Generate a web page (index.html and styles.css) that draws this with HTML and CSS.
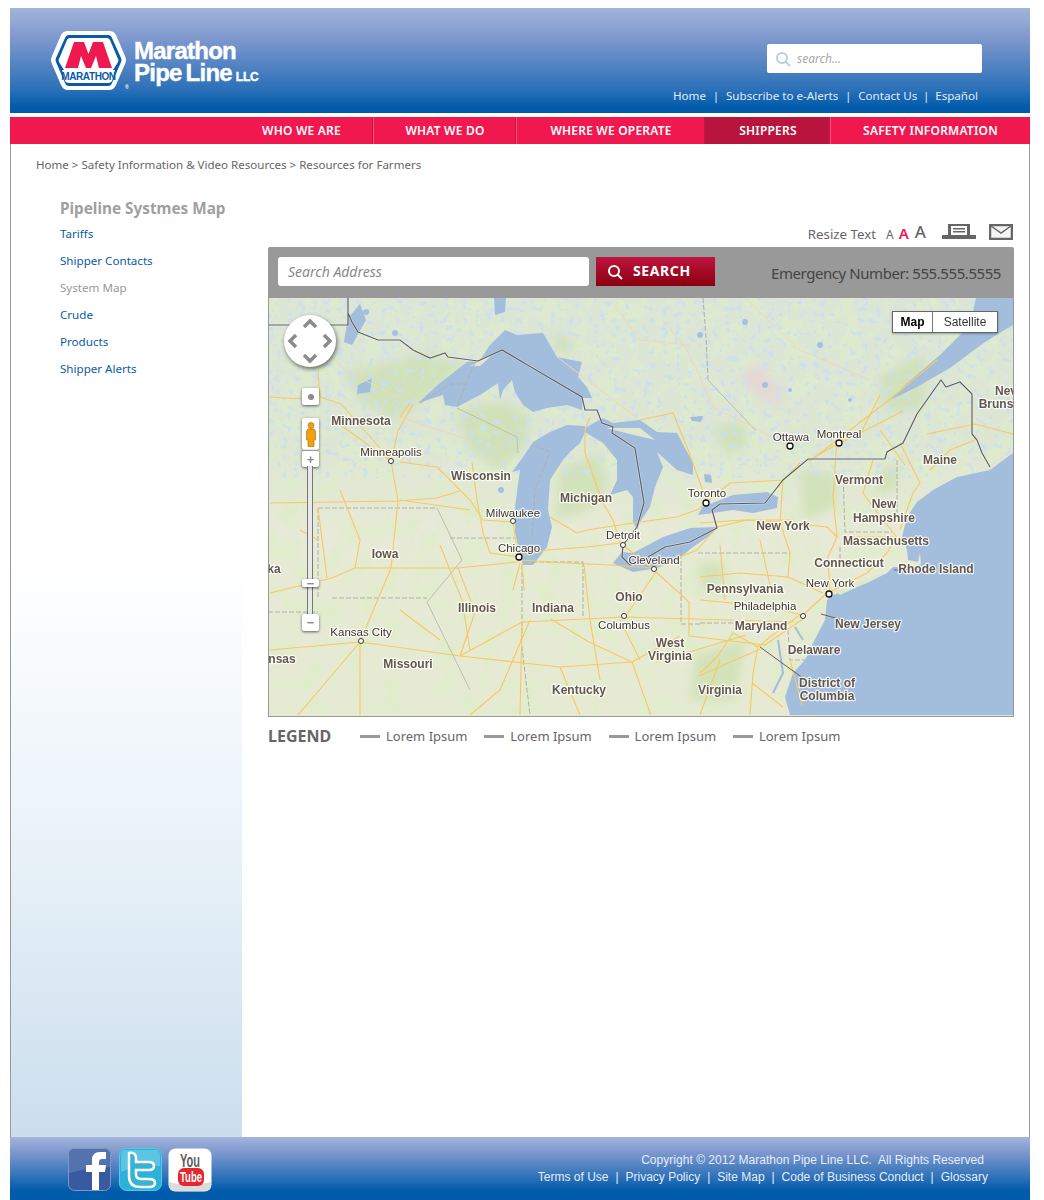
FILE: index.html
```html
<!DOCTYPE html>
<html lang="en">
<head>
<meta charset="utf-8">
<title>Marathon Pipe Line LLC - Pipeline Systems Map</title>
<link rel="stylesheet" href="styles.css">
</head>
<body>
<div class="page">
  <header class="header">
    <a class="brand" href="#">
      <svg class="logo" viewBox="0 0 78 62" width="78" height="62" aria-hidden="true">
        <path class="logo-outer" d="M17 0H58Q63 0 65 4L74 25Q76 29 74 33L65 54Q63 59 58 59H17Q12 59 10 54L1 33Q-1 29 1 25L10 4Q12 0 17 0Z"/>
        <path class="logo-blue" d="M18 4H57Q60 4 61 7L70 27Q71 29 70 31L61 52Q60 55 57 55H18Q15 55 14 52L5 31Q4 29 5 27L14 7Q15 4 18 4Z"/>
        <path class="logo-outer" d="M19 7H56Q58 7 59 9L67 28Q68 29 67 31L62 39H13L8 31Q7 29 8 28L16 9Q17 7 19 7Z"/>
        <path class="logo-red" d="M14 37L23 11H33L37.500 23L42 11H52L61 37H48L45 25L40 37H35L30 25L27 37Z"/>
        <path class="logo-outer" d="M11 39H64L61 50Q60 52 57 52H18Q15 52 14 50Z"/>
        <text class="logo-word" x="37.500" y="49">MARATHON</text>
        <text class="logo-reg" x="74" y="58">®</text>
      </svg>
      <span class="brand-name">Marathon<br>Pipe Line <small>LLC</small></span>
    </a>
    <div class="header-tools">
      <div class="site-search">
        <svg width="16" height="16" viewBox="0 0 16 16" aria-hidden="true"><circle class="glass" cx="7" cy="7" r="5"/><path class="glass" d="M10.500 10.500L15 15"/></svg>
        <span>search...</span>
      </div>
      <nav class="top-links">
        <a href="#">Home</a><i>|</i><a href="#">Subscribe to e-Alerts</a><i>|</i><a href="#">Contact Us</a><i class="tight">|</i><a href="#">Español</a>
      </nav>
    </div>
  </header>
  <nav class="mainnav">
    <a class="n1" href="#">WHO WE ARE</a>
    <a class="n2" href="#">WHAT WE DO</a>
    <a class="n3" href="#">WHERE WE OPERATE</a>
    <a class="n4 active" href="#">SHIPPERS</a>
    <a class="n5" href="#">SAFETY INFORMATION</a>
  </nav>
  <main class="main">
    <div class="crumbs">Home &gt; Safety Information &amp; Video Resources &gt; Resources for Farmers</div>
    <div class="columns">
      <aside class="sidebar">
        <h2>Pipeline Systmes Map</h2>
        <ul>
          <li><a href="#">Tariffs</a></li>
          <li><a href="#">Shipper Contacts</a></li>
          <li class="current">System Map</li>
          <li><a href="#">Crude</a></li>
          <li><a href="#">Products</a></li>
          <li><a href="#">Shipper Alerts</a></li>
        </ul>
      </aside>
      <section class="content">
        <div class="tools">
          <span class="resize">Resize Text</span>
          <span class="a a1">A</span><span class="a a2">A</span><span class="a a3">A</span>
          <svg class="print" width="34" height="16" viewBox="0 0 34 16" aria-hidden="true"><path class="tool-fill" d="M6 0H28V11H34V15H0V11H6ZM9 2V11H25V2ZM11 4H23V5.500H11ZM11 7H23V8.500H11Z" fill-rule="evenodd"/></svg>
          <svg class="mail" width="24" height="16" viewBox="0 0 24 16" aria-hidden="true"><rect class="tool-line" x="1" y="1" width="22" height="14"/><path class="tool-thin" d="M2 2L12 9L22 2"/></svg>
        </div>
        <div class="searchbar">
          <div class="address">Search Address</div>
          <button class="go" type="button">
            <svg width="16" height="16" viewBox="0 0 16 16" aria-hidden="true"><circle class="go-glass" cx="7" cy="7" r="5"/><path class="go-glass" d="M10.500 10.500L15 15"/></svg>
            <span>SEARCH</span>
          </button>
          <div class="emergency">Emergency Number: 555.555.5555</div>
        </div>
        <div class="map">
          <svg class="map-art" width="744" height="417" viewBox="269 298 744 417" aria-label="Map of the Great Lakes and north-eastern United States">
            <defs>
              <linearGradient id="land" x1="0" y1="0" x2="0" y2="1">
                <stop offset="0" stop-color="#dce6d6"/><stop offset=".35" stop-color="#dde6d2"/><stop offset=".55" stop-color="#e7ead6"/><stop offset="1" stop-color="#e6ead2"/>
              </linearGradient>
              <filter id="mottle" x="0" y="0" width="100%" height="100%">
                <feTurbulence type="fractalNoise" baseFrequency=".05" numOctaves="4" seed="7"/>
                <feColorMatrix type="matrix" values="0 0 0 0 .74  0 0 0 0 .85  0 0 0 0 .60  0 0 0 6 -2.900"/>
              </filter>
              <filter id="speck" x="0" y="0" width="100%" height="100%">
                <feTurbulence type="fractalNoise" baseFrequency=".16" numOctaves="2" seed="23"/>
                <feColorMatrix type="matrix" values="0 0 0 0 .60  0 0 0 0 .74  0 0 0 0 .90  0 0 0 14 -8.600"/>
              </filter>
              <filter id="soft"><feGaussianBlur stdDeviation="4"/></filter>
            </defs>
            <rect x="269" y="298" width="744" height="417" fill="url(#land)"/>
            <rect class="mottle" x="269" y="298" width="744" height="417" filter="url(#mottle)"/>
            <g class="green" filter="url(#soft)">
              <path d="M345 372L395 362L430 352L444 362L470 362L440 385L418 403L395 420L360 400Z"/>
              <path d="M455 410L500 402L530 415L525 445L500 470L470 450Z"/>
              <path d="M560 470L600 455L608 490L590 510L555 520Z"/>
              <path d="M715 428L745 423L748 445L725 455Z"/>
              <path d="M800 470L835 475L838 505L805 520Z"/>
              <path d="M880 470L900 465L895 490L875 495Z"/>
              <path d="M880 375L925 355L925 410L885 410Z"/>
              <path d="M700 560L725 565L720 590L700 590Z"/>
              <path d="M695 655L745 640L735 700L690 700Z"/>
              <path d="M553 330L575 345L570 355L555 350Z"/>
            </g>
            <path class="pink" filter="url(#soft)" d="M740 375L760 362L782 392L780 405L755 395Z"/>
            <rect class="speck" x="269" y="298" width="744" height="180" filter="url(#speck)"/>
            <g class="water">
              <path d="M418 403L440 383L467 362L480 360L490 345L505 330L517 335L543 333L557 357L582 362L578 377L587 387L592 398L583 398L582 410L567 405L547 408L533 412L523 405L515 392L512 380L503 390L500 400L498 383L480 395L457 407L445 405L443 395Z"/>
              <path d="M585 426L567 425L550 432L533 442L523 457L512 472L520 470L515 507L515 533L523 565L533 565L547 547L552 527L548 510L550 480L563 460L570 452L580 443L585 432Z"/>
              <path d="M585 428L603 418L613 423L640 420L657 432L677 433L693 463L693 475L677 470L657 452L663 467L655 487L650 507L640 522L637 530L633 522L633 497L627 490L610 495L617 480L617 460L603 443L585 432Z"/>
              <path d="M613 563L622 552L633 553L663 537L690 528L717 527L713 533L693 547L677 560L657 568L633 572Z"/>
              <path d="M698 515L702 507L733 495L767 492L778 497L777 508L753 513L733 510L713 513Z"/>
              <path d="M1013 453L990 470L957 477L933 490L917 502L907 517L902 537L907 550L908 560L918 562L920 553L921 564L913 567L893 567L887 573L867 583L833 595L827 600L825 620L813 643L805 660L793 673L785 697L790 715H1013Z"/>
              <path d="M976 298L970 325L940 355L905 385L890 400L915 388L950 368L985 342L1013 325V298Z"/>
              <path d="M348 318L360 304L366 320L352 345L344 342Z"/>
              <path d="M358 385L372 378L370 392L357 394Z"/>
              <path d="M494 298L506 298L505 312L495 315Z"/>
              <path d="M690 417L703 416L701 422L692 421Z"/>
              <path d="M704 474L711 475L712 483L705 482Z"/>
            </g>
            <path class="land-strip" d="M836 591L862 580L886 572L870 581L840 595ZM470 366L492 355L480 366ZM606 428L640 428L655 440L630 434Z"/>
            <path class="bay" d="M778 640L783 673L773 693M795 627L803 640"/>
            <g class="lakes">
              <circle cx="366" cy="312" r="3"/><circle cx="395" cy="333" r="3"/><circle cx="700" cy="335" r="3"/><circle cx="745" cy="322" r="3"/><circle cx="820" cy="345" r="3"/><circle cx="765" cy="385" r="3"/><circle cx="790" cy="390" r="2"/><circle cx="850" cy="400" r="2"/><circle cx="501" cy="490" r="3"/>
            </g>
            <g class="state">
              <path d="M318 508H437M332 598H427M522 565V639M583 562V618M532 562H583M681 547V624H700M698 553H790M700 623H745M843 473L845 532H892M897 460V513M840 547V567M788 630L790 660H805M703 298L706 337L708 380M475 362L457 407M420 403L450 384H467M533 445L550 452L535 490L532 537M450 538H515M268 612H318M318 508V598M521 639L530 715"/>
            </g>
            <path class="shade" d="M457 408L517 437L518 453M708 380L756 431M437 508L462 560L427 602M427 602L470 690"/>
            <g class="roads pale">
              <path d="M663 320L687 350L700 377L713 407L753 427L790 447M610 300L640 340L690 345M557 357L640 420M745 298L800 350L870 380M400 417L470 440M320 345L345 370L410 403"/>
            </g>
            <g class="roads">
              <path d="M400 462L437 467L470 500L483 520L513 522L518 557L547 550L587 547L620 543M518 560L567 563L610 565L653 568"/>
              <path d="M620 543L613 520L603 503L585 453L585 430L590 417M550 517L577 533L587 530L633 523L677 517L697 510L707 502"/>
              <path d="M620 543L653 568L697 550L717 527L747 520L793 520M707 502L730 483L783 480L800 463M707 502L687 447L673 413L640 420"/>
              <path d="M400 500L470 510M472 463L477 500L483 533L490 553L518 557M400 417L410 403M520 563L513 590M522 563L524 590"/>
              <path d="M700 523L743 520L780 522L827 527L837 537M783 480L780 522L790 553L788 577L823 593M837 440L833 497L837 537L828 557L830 593"/>
              <path d="M873 460L863 493L883 520L897 537L887 553L867 573L830 592M900 443L920 483L913 493L900 530M850 537H897"/>
              <path d="M700 577L740 573L788 577M700 600L733 603L767 607L803 615L827 593M800 615L770 637L758 647L753 673L750 715M758 647L733 633L717 657L700 673M752 683L783 707"/>
              <path d="M270 650L360 642L460 656L522 622L625 617L794 622M360 642L298 715M360 642V715M460 656L560 667L632 662L680 636M332 578L355 568L458 568L518 562"/>
              <path d="M270 503L398 501L437 498L460 491M270 593L332 578M458 568L475 612L460 656M318 508L327 578M391 461L398 501L391 568L360 642M270 397L303 399M413 404L398 431L391 461M332 419L391 461M318 370L320 397L341 404L389 458"/>
              <path d="M560 667L580 715M551 619L589 642L632 662M522 622L520 715M625 617L656 572M656 572L689 602L689 636L765 645L803 619M656 662L746 635M699 676L760 649M632 662L651 716"/>
              <path d="M810 461L889 400L937 360M839 444L903 411M927 434L975 424L1013 434M808 461L839 443L851 432M930 470L950 450L975 440M880 430L905 465M860 435L880 395"/>
              <path d="M440 545L462 600L470 650M530 620L500 690L470 715M584 565L590 620L600 680M620 620L640 660M760 540L770 585M720 545L725 600M400 610L440 640M340 490L360 540L355 568M300 530L318 540M790 660L802 705M720 660L700 715"/>
            </g>
            <path class="border-halo" d="M348 298V325H268M348 313L352 322L358 332L378 340L400 340L413 350L430 358L445 353L448 357L478 361L502 350L582 397L585 410L597 410L602 423L613 427L612 433L635 448L644 503L637 527L623 545L622 557L630 565L648 557L665 547L690 542L717 528L712 510L720 504L765 503L783 480L808 459H885L887 452L903 443L917 414L941 380L946 387L960 382L972 394V434L977 440L982 453L990 467"/>
            <path class="border" d="M348 298V325H268M348 313L352 322L358 332L378 340L400 340L413 350L430 358L445 353L448 357L478 361L502 350L582 397L585 410L597 410L602 423L613 427L612 433L635 448L644 503L637 527L623 545L622 557L630 565L648 557L665 547L690 542L717 528L712 510L720 504L765 503L783 480L808 459H885L887 452L903 443L917 414L941 380L946 387L960 382L972 394V434L977 440L982 453L990 467"/>
            <path class="leader" d="M894 570H908M821 614L846 621M760 647L811 684"/>
            <g class="pins">
              <circle cx="391" cy="461" r="2.500"/><circle cx="513" cy="521" r="2.500"/><circle cx="623" cy="545" r="2.500"/><circle cx="654" cy="569" r="2.500"/><circle cx="803" cy="616" r="2.500"/><circle cx="624" cy="616" r="2.500"/><circle cx="361" cy="641" r="2.500"/>
            </g>
            <g class="pins big">
              <circle cx="519" cy="557" r="3"/><circle cx="706" cy="503" r="3"/><circle cx="790" cy="446" r="3"/><circle cx="839" cy="443" r="3"/><circle cx="829" cy="594" r="3"/>
            </g>
            <g class="lbl bold">
              <text x="361" y="425">Minnesota</text><text x="481" y="480">Wisconsin</text><text x="586" y="502">Michigan</text><text x="385" y="558">Iowa</text><text x="940" y="464">Maine</text><text x="859" y="484">Vermont</text><text x="884" y="508">New</text><text x="884" y="522">Hampshire</text><text x="783" y="530">New York</text><text x="886" y="545">Massachusetts</text><text x="849" y="567">Connecticut</text><text x="936" y="573">Rhode Island</text><text x="745" y="593">Pennsylvania</text><text x="761" y="630">Maryland</text><text x="868" y="628">New Jersey</text><text x="814" y="654">Delaware</text><text x="827" y="687">District of</text><text x="827" y="700">Columbia</text><text x="670" y="647">West</text><text x="670" y="660">Virginia</text><text x="720" y="694">Virginia</text><text x="579" y="694">Kentucky</text><text x="629" y="601">Ohio</text><text x="553" y="612">Indiana</text><text x="477" y="612">Illinois</text><text x="408" y="668">Missouri</text><text x="274" y="573">ka</text><text x="282" y="663">nsas</text><text x="1006" y="395">Nev</text><text x="996" y="408">Bruns</text>
            </g>
            <g class="lbl">
              <text x="391" y="456">Minneapolis</text><text x="513" y="517">Milwaukee</text><text x="519" y="552">Chicago</text><text x="623" y="539">Detroit</text><text x="707" y="497">Toronto</text><text x="791" y="441">Ottawa</text><text x="839" y="438">Montreal</text><text x="830" y="587">New York</text><text x="765" y="610">Philadelphia</text><text x="624" y="629">Columbus</text><text x="654" y="564">Cleveland</text><text x="361" y="636">Kansas City</text>
            </g>
          </svg>
          <div class="pan">
            <svg width="52" height="52" viewBox="0 0 52 52" aria-hidden="true"><path class="chev" d="M20 12L26 6L32 12M12 20L6 26L12 32M40 20L46 26L40 32M20 40L26 46L32 40"/></svg>
          </div>
          <div class="zoom-ctl center"><b></b></div>
          <div class="zoom-ctl person">
            <svg width="10" height="25" viewBox="0 0 10 25" aria-hidden="true"><circle class="peg" cx="5" cy="3.500" r="3"/><path class="peg" d="M2 7H8L9.500 9V18H8V24.500H2V18H.5V9Z"/></svg>
          </div>
          <div class="zoom-ctl plus">+</div>
          <div class="zoom-track"></div>
          <div class="zoom-ctl thumb">−</div>
          <div class="zoom-ctl minus">−</div>
          <div class="maptype"><b>Map</b><span>Satellite</span></div>
        </div>
        <div class="legend">
          <strong>LEGEND</strong>
          <span class="key">Lorem Ipsum</span>
          <span class="key">Lorem Ipsum</span>
          <span class="key">Lorem Ipsum</span>
          <span class="key">Lorem Ipsum</span>
        </div>
      </section>
    </div>
  </main>
  <footer class="footer">
    <div class="social">
      <svg width="43" height="43" viewBox="0 0 43 43" aria-label="Facebook"><rect class="fb" x="0.500" y="0.500" width="42" height="42" rx="6"/><path class="fb-gloss" d="M1 6Q1 1 6 1H37Q42 1 42 6V19Q20 20 1 25Z"/><path class="fb-f" d="M24 42V24H18V17H24V12Q24 4 32 4H38V11H34Q31 11 31 14V17H38L37 24H31V42Z"/></svg>
      <svg width="43" height="43" viewBox="0 0 43 43" aria-label="Twitter"><rect class="tw" x="0.500" y="0.500" width="42" height="42" rx="7"/><path class="tw-gloss" d="M2 7Q2 2 7 2H36Q41 2 41 7V18Q20 16 2 24Z"/><path class="tw-t" d="M10 5Q17 4 17 10V14H30Q35 14 35 18Q35 22 30 22H17V26Q17 31 22 31H30Q36 31 36 35Q36 39 30 39H21Q10 39 10 28Z"/></svg>
      <svg width="44" height="44" viewBox="0 0 44 44" aria-label="YouTube"><rect class="yt" x="0.500" y="0.500" width="43" height="43" rx="7"/><path class="yt-shade" d="M1 34Q20 40 43 34V37Q43 43 37 43H7Q1 43 1 37Z"/><text class="yt-you" x="12" y="19" textLength="20" lengthAdjust="spacingAndGlyphs">You</text><rect class="yt-red" x="10" y="20" width="26" height="18" rx="6"/><text class="yt-tube" x="12" y="34" textLength="22" lengthAdjust="spacingAndGlyphs">Tube</text></svg>
    </div>
    <div class="legal">
      <p class="copy">Copyright © 2012 Marathon Pipe Line LLC.&nbsp; All Rights Reserved</p>
      <p class="links"><a href="#">Terms of Use</a><i>|</i><a href="#">Privacy Policy</a><i>|</i><a href="#">Site Map</a><i>|</i><a href="#">Code of Business Conduct</a><i>|</i><a href="#">Glossary</a></p>
    </div>
  </footer>
</div>
</body>
</html>
```

FILE: styles.css
```css
* { box-sizing: border-box; }
html, body { margin: 0; padding: 0; background: #fff; }
body { font-family: "Noto Sans", "Open Sans", sans-serif; color: #666; }
a { color: inherit; text-decoration: none; }

.page { width: 1020px; height: 1192px; margin: 8px 0 0 10px; display: flex; flex-direction: column; }

/* header */
.header { height: 105px; flex: none; display: flex; justify-content: space-between; background: linear-gradient(#a3b4dc 0%, #7c97cd 30%, #2b70b8 78%, #005bab 95%); }
.brand { display: flex; align-items: flex-start; gap: 5px; padding: 23px 0 0 41px; }
.logo { display: block; flex: none; }
.logo-outer { fill: #fff; }
.logo-blue { fill: #0b5aa8; }
.logo-red { fill: #ee1a4f; }
.logo-word { font: 700 10px "Liberation Sans", sans-serif; fill: #0b5aa8; text-anchor: middle; letter-spacing: -.4px; }
.logo-reg { font: 700 5px "Liberation Sans", sans-serif; fill: #fff; }
.brand-name { font: 700 24px/22px "Liberation Sans", sans-serif; color: #fff; letter-spacing: -.75px; word-spacing: -2px; padding-top: 9px; -webkit-text-stroke: .4px #fff; white-space: nowrap; }
.brand-name small { font-size: 12px; letter-spacing: -.3px; }
.header-tools { width: 263px; padding: 36px 0 0; display: flex; flex-direction: column; }
.site-search { width: 215px; height: 29px; background: #fff; border-radius: 2px; display: flex; align-items: center; gap: 6px; padding-left: 8px; font-size: 12px; font-style: italic; color: #aaa; }
.glass { fill: none; stroke: #b7cfe2; stroke-width: 2; }
.top-links { margin-top: 14px; display: flex; font-size: 11.600px; line-height: 18px; color: #e2ebf6; white-space: nowrap; margin-left: -94px; }
.top-links i { font-style: normal; width: 20px; text-align: center; }
.top-links i.tight { width: 18px; }

/* main navigation */
.mainnav { margin-top: 4px; height: 27px; flex: none; background: #f0184f; display: flex; padding-left: 219px; font-size: 12px; font-weight: 600; letter-spacing: .2px; line-height: 27px; color: #fff; white-space: nowrap; }
.mainnav a { text-align: center; padding-left: 2px; border-right: 1px solid #c51442; box-shadow: 1px 0 0 #f6517a; }
.n1 { width: 144px; }
.n2 { width: 143px; }
.n3 { width: 189px; }
.n4 { width: 125px; }
.mainnav .n5 { width: 199px; border-right: 0; box-shadow: none; }
.mainnav .active { background: #b8143e; }

/* body */
.main { flex: 1; min-height: 0; border-left: 1px solid #999; border-right: 1px solid #999; display: flex; flex-direction: column; }
.crumbs { height: 40px; flex: none; padding: 13px 0 0 25px; font-size: 11.550px; line-height: 16px; color: #666; }
.columns { flex: 1; min-height: 0; display: flex; }
.sidebar { width: 231px; flex: none; padding: 14px 0 0 49px; background: linear-gradient(#fff 0, #fff 40%, #eaf3f9 68%, #cbdeed 100%); }
.sidebar h2 { margin: 0; font-size: 15.300px; line-height: 20px; font-weight: 700; color: #a0a0a0; }
.sidebar ul { margin: 2px 0 0; padding: 0; list-style: none; font-size: 11.600px; line-height: 27px; color: #0a5ba8; }
.sidebar .current { color: #999; }

.content { width: 746px; margin-left: 26px; display: flex; flex-direction: column; }
.tools { height: 63px; flex: none; display: flex; align-items: flex-start; justify-content: flex-end; padding-top: 40px; color: #666; }
.resize { font-size: 13.300px; line-height: 18px; margin-top: 1px; }
.a { line-height: 18px; font-weight: 400; }
.a1 { font-size: 12px; margin: 2px 0 0 10px; }
.a2 { font-size: 15px; font-weight: 600; color: #f0184f; margin: 0 0 0 5px; }
.a3 { font-size: 17px; font-weight: 500; margin: -1px 0 0 6px; }
.print { margin: 0 0 0 16px; }
.mail { margin: 0 1px 0 13px; }
.tool-fill { fill: #666; }
.tool-line { fill: #f4f4f4; stroke: #666; stroke-width: 2.500; }
.tool-thin { fill: none; stroke: #666; stroke-width: 1.500; }

.searchbar { height: 51px; flex: none; background: #999; border-radius: 2px 2px 0 0; display: flex; align-items: flex-start; padding: 10px 13px 0 10px; }
.address { width: 311px; height: 29px; background: #fff; border-radius: 3px; padding-left: 10px; font-size: 14px; font-style: italic; line-height: 29px; color: #8a8a8a; }
.go { width: 119px; height: 29px; margin-left: 7px; padding: 0 0 0 11px; border: 0; display: flex; align-items: center; gap: 10px; background: linear-gradient(#c0143f, #8a0010); color: #fff; font: 700 14px/27px "Noto Sans", sans-serif; letter-spacing: .6px; }
.go span { margin-top: -2px; }
.go-glass { fill: none; stroke: #fff; stroke-width: 2; }
.emergency { margin-left: auto; font-size: 15px; line-height: 33px; color: #444; letter-spacing: -.43px; white-space: nowrap; }

.map { height: 419px; flex: none; position: relative; border: 1px solid #999; border-top: 0; overflow: hidden; background: #e6e9cf; }
.map-art { display: block; }
.mottle { opacity: .7; }
.speck { opacity: .8; }
.green path { fill: #c8deaa; opacity: .6; }
.pink { fill: #e8d4d6; opacity: .8; }
.water { fill: #a3bddd; }
.land-strip { fill: #dfe8cf; }
.bay { fill: none; stroke: #a3bddd; stroke-width: 2; }
.lakes { fill: #a4c0e2; }
.state { fill: none; stroke: #b0b0a8; stroke-width: 1; stroke-dasharray: 5 2; }
.shade { fill: none; stroke: #bdbdb0; stroke-width: 1; }
.roads path { fill: none; stroke: #f9c85f; stroke-width: 1.100; stroke-linejoin: round; }
.roads.pale path { stroke: #e8d9b8; stroke-width: 1; }
.border-halo { fill: none; stroke: #fff; stroke-width: 2.400; opacity: .45; }
.border { fill: none; stroke: #5e5e5e; stroke-width: 1.200; }
.leader { fill: none; stroke: #6a6155; stroke-width: 1; }
.pins circle { fill: #fff; stroke: #333; stroke-width: 1; }
.pins.big circle { stroke: #111; stroke-width: 1.300; }
.lbl text { font: 400 11.500px "Liberation Sans", sans-serif; fill: #3d352c; text-anchor: middle; paint-order: stroke; stroke: rgba(255, 255, 255, .8); stroke-width: 2.500px; stroke-linejoin: round; }
.lbl.bold text { font-weight: 700; fill: #62574a; font-size: 12px; }

.pan { position: absolute; left: 15px; top: 17px; width: 52px; height: 52px; border-radius: 50%; background: #fff; box-shadow: 1px 2px 4px rgba(0, 0, 0, .55); }
.pan svg { display: block; }
.chev { fill: none; stroke: #8b8b8b; stroke-width: 3.500; }
.zoom-ctl { position: absolute; left: 33px; width: 17px; background: #fff; border-radius: 2px; box-shadow: 0 1px 3px rgba(0, 0, 0, .6); display: flex; align-items: center; justify-content: center; font: 700 13px/1 "Liberation Sans", sans-serif; color: #8b8b8b; }
.center { top: 90px; height: 17px; }
.center b { width: 6px; height: 6px; border-radius: 50%; background: #8b8b8b; }
.person { top: 120px; height: 32px; }
.peg { fill: #f0a10e; stroke: #b06a05; stroke-width: .6; }
.plus { top: 152px; height: 17px; border-top: 1px solid #999; }
.zoom-track { position: absolute; left: 38px; top: 168px; width: 6px; height: 150px; background: #e9e9e9; border-left: 1px solid #777; border-right: 1px solid #777; }
.thumb { top: 281px; height: 8px; }
.minus { top: 316px; height: 17px; }
.maptype { position: absolute; right: 15px; top: 13px; height: 22px; display: flex; font: 12px/20px "Liberation Sans", sans-serif; color: #333; background: #fff; border: 1px solid #666; box-shadow: 0 1px 2px rgba(0, 0, 0, .3); }
.maptype b { width: 40px; text-align: center; color: #000; border-right: 1px solid #777; font-weight: 700; }
.maptype span { width: 64px; text-align: center; }

.legend { display: flex; align-items: center; height: 20px; margin-top: 9px; font-size: 13px; color: #666; white-space: nowrap; }
.legend strong { width: 92px; font-size: 16px; }
.key { display: flex; align-items: center; width: 124.300px; }
.key::before { content: ""; width: 20px; height: 3px; margin-right: 6px; background: #999; }

/* footer */
.footer { height: 63px; flex: none; display: flex; justify-content: space-between; background: linear-gradient(#a3b4dc 0%, #7c97cd 25%, #2b70b8 65%, #005bab 85%); }
.social { display: flex; align-items: flex-start; gap: 8px; padding: 11px 0 0 58px; }
.social svg { display: block; flex: none; }
.social svg:last-child { margin-left: -2px; }
.fb { fill: #3a5a9f; stroke: #7f96c6; }
.fb-gloss { fill: #5f7db5; opacity: .7; }
.fb-f { fill: #fff; }
.tw { fill: #2cb1d8; stroke: #5cc8e6; }
.tw-gloss { fill: #6fcfe9; opacity: .7; }
.tw-t { fill: #38b2d6; stroke: #fff; stroke-width: 2.500; }
.yt { fill: #fff; }
.yt-shade { fill: #dcdcdc; }
.yt-you { font: 700 19px "Liberation Sans", sans-serif; fill: #5d5d5d; }
.yt-red { fill: #e3282e; }
.yt-tube { font: 700 14px "Liberation Sans", sans-serif; fill: #fff; }
.legal { padding: 15px 42px 0 0; font: 12px/17px "Liberation Sans", sans-serif; color: #e6edf7; text-align: right; }
.legal p { margin: 0; white-space: nowrap; }
.copy { padding-right: 4px; letter-spacing: .03px; }
.links i { font-style: normal; width: 17px; display: inline-block; text-align: center; }
```
